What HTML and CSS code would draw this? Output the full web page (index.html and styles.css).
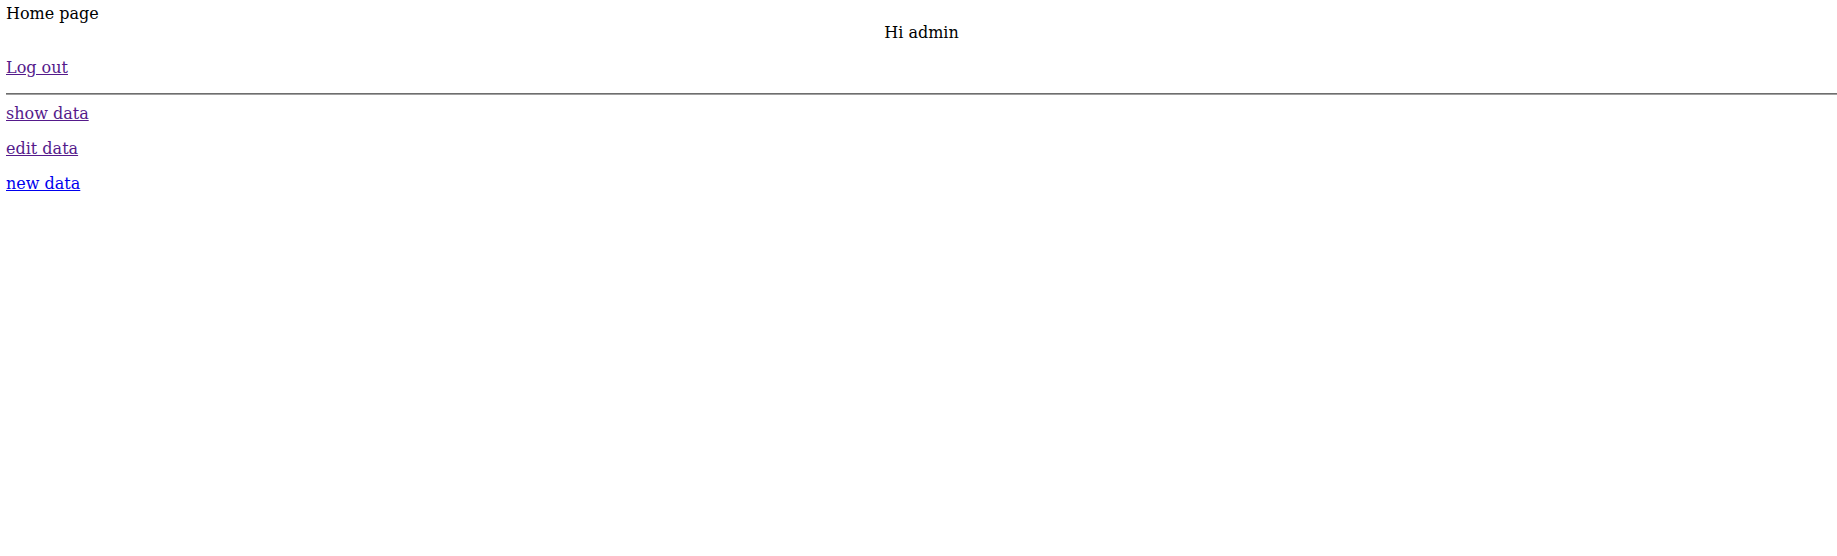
FILE: index.html
```html
<!DOCTYPE html>
<html>
<head>
<meta charset="utf-8">
<link rel="stylesheet" href="styles.css">
</head>
<body class="page">
<div class="title">Home page</div>
<div class="greeting">Hi admin</div>
<p class="row"><a class="visited" href="#logout">Log out</a></p>
<hr class="rule">
<div class="menu">
<p class="row"><a class="visited" href="#show">show data</a></p>
<p class="row"><a class="visited" href="#edit">edit data</a></p>
<p class="row"><a class="fresh" href="#new">new data</a></p>
</div>
</body>
</html>
```

FILE: styles.css
```css
html, body {
  margin: 0;
  padding: 0;
  background: #ffffff;
}
.page {
  padding: 4px 0 0 6px;
  font-family: "DejaVu Serif", serif;
  font-size: 16px;
  color: #000000;
}
.title {
  line-height: 19px;
}
.greeting {
  text-align: center;
  line-height: 19px;
}
.row {
  margin: 16px 0;
  line-height: 19px;
}
.menu .row:first-child {
  margin-top: 9px;
}
.menu {
  padding-top: 0;
}
.visited {
  color: #551a8b;
  text-decoration: underline;
}
.fresh {
  color: #0000ee;
  text-decoration: underline;
}
.rule {
  margin: 8px 0 0;
  border: 0;
  border-top: 1px solid #6e6e6e;
  border-bottom: 1px solid #a0a0a0;
  height: 0;
}
```
